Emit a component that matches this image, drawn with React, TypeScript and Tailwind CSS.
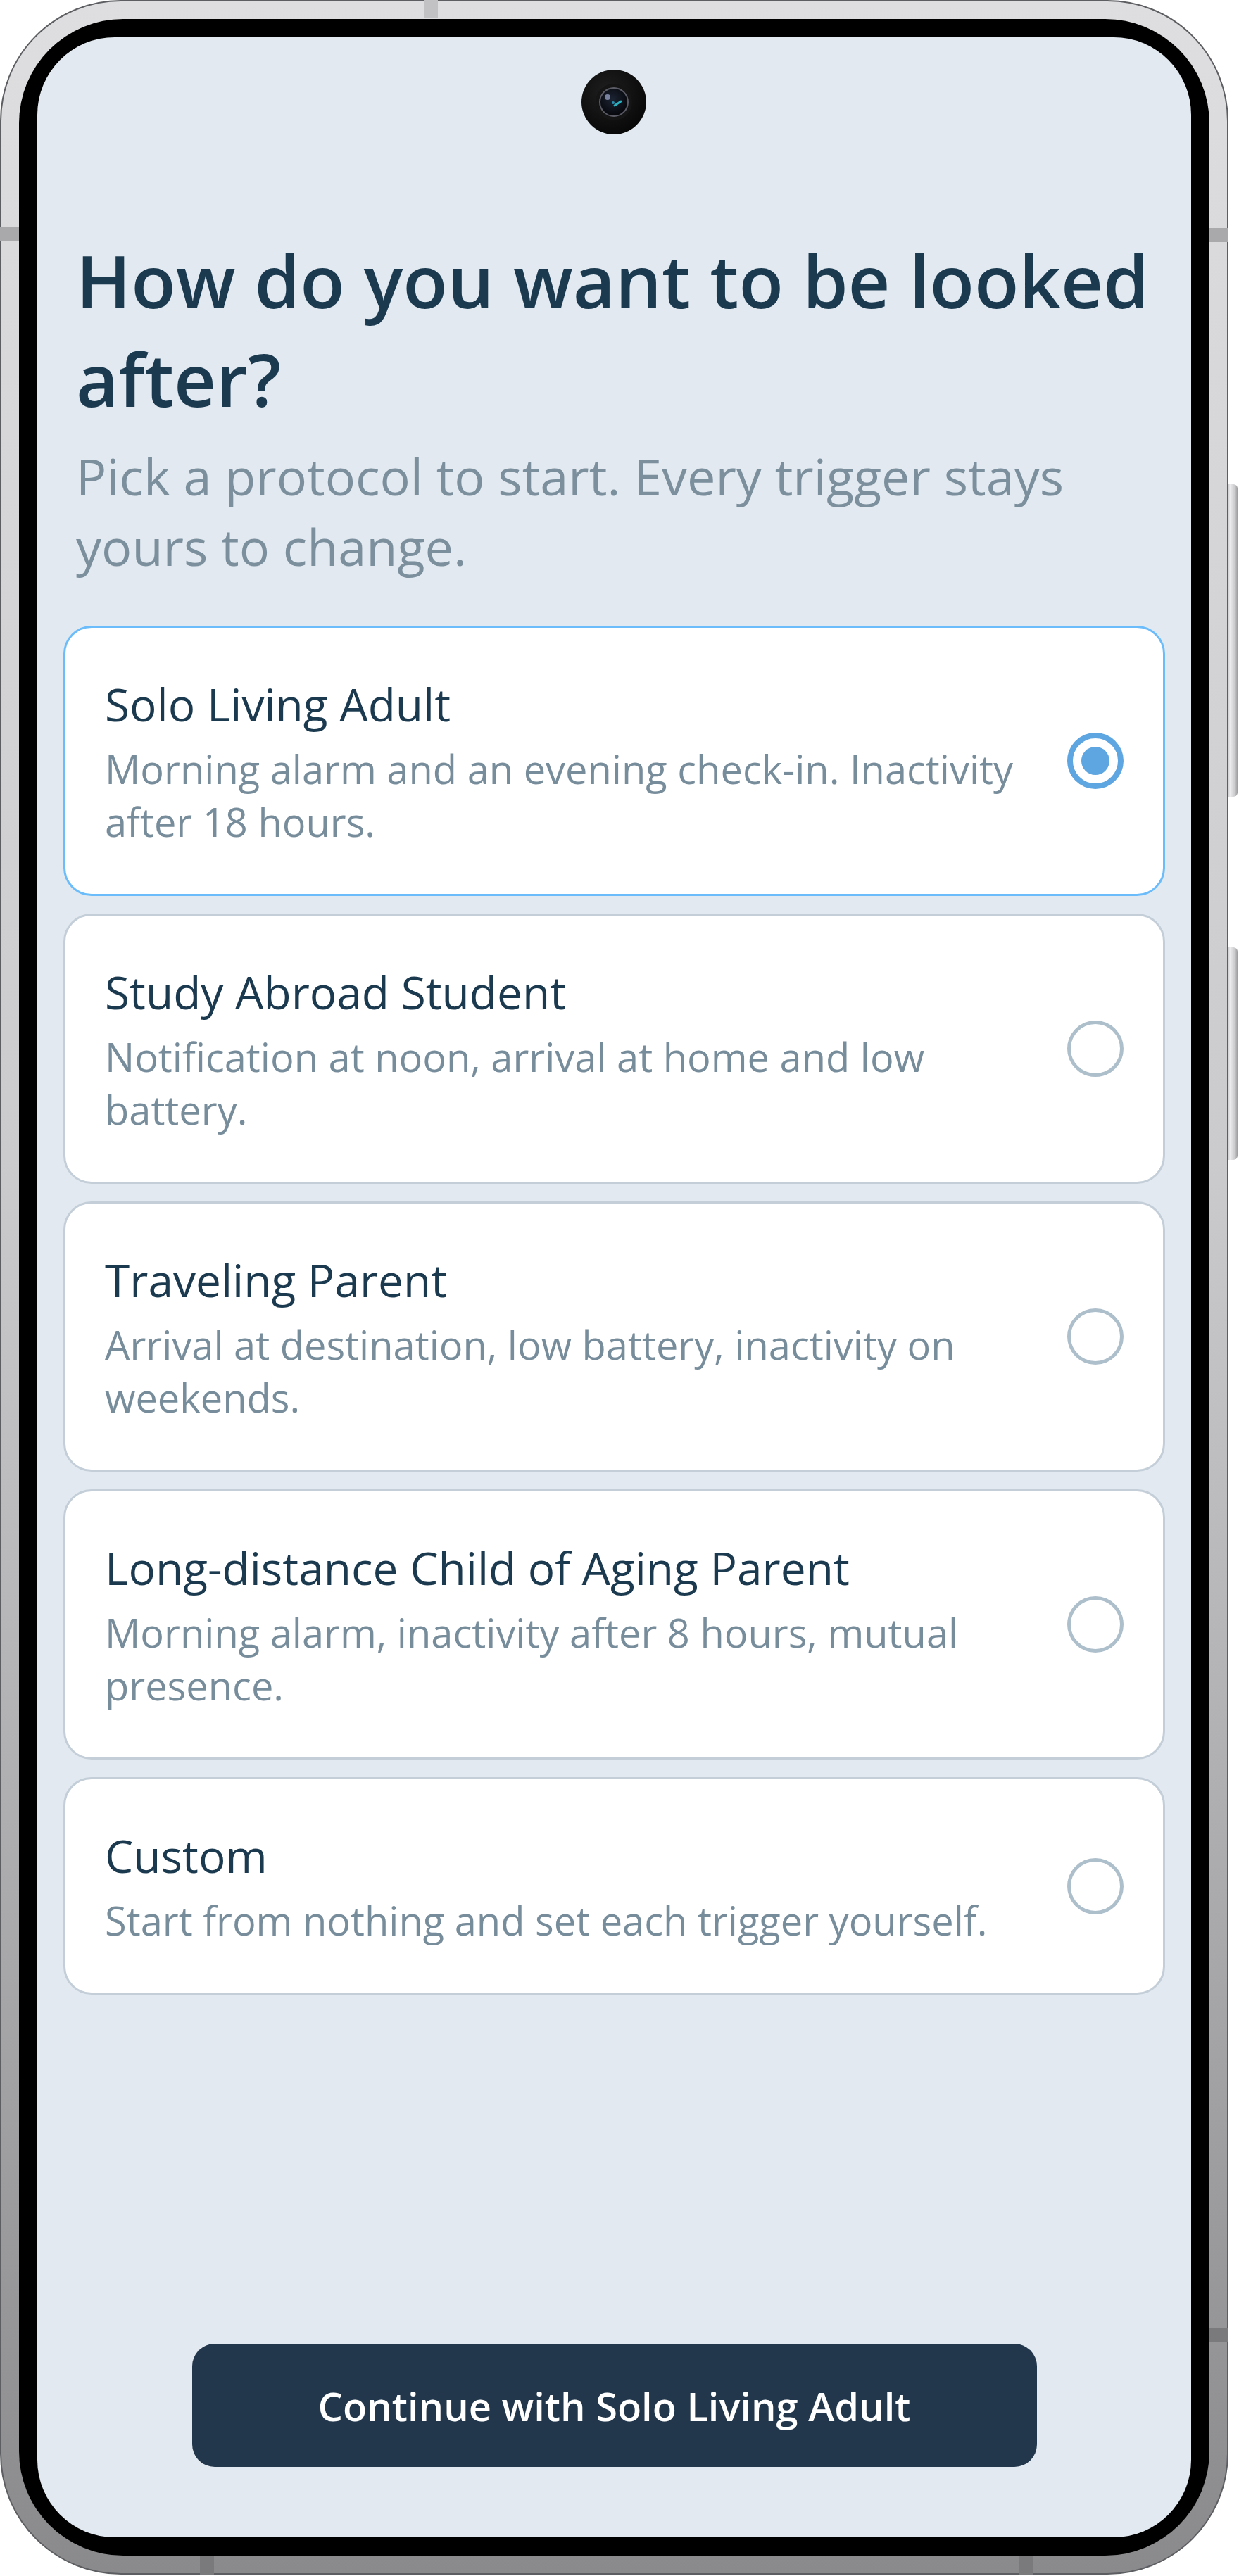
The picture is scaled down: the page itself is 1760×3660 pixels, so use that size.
import React from "react";

const options = [
  { title: "Solo Living Adult", desc: "Morning alarm and an evening check-in. Inactivity after 18 hours." },
  { title: "Study Abroad Student", desc: "Notification at noon, arrival at home and low battery." },
  { title: "Traveling Parent", desc: "Arrival at destination, low battery, inactivity on weekends." },
  { title: "Long-distance Child of Aging Parent", desc: "Morning alarm, inactivity after 8 hours, mutual presence." },
  { title: "Custom", desc: "Start from nothing and set each trigger yourself." },
];

function Radio({ selected }: { selected: boolean }) {
  if (selected) {
    return (
      <div className="flex h-[80px] w-[80px] shrink-0 items-center justify-center rounded-full border-[8px] border-[#5ea6e1]">
        <div className="h-[40px] w-[40px] rounded-full bg-[#5ea6e1]" />
      </div>
    );
  }
  return <div className="h-[80px] w-[80px] shrink-0 rounded-full border-[5px] border-[#aebfcc]" />;
}

function Camera() {
  return (
    <svg width="92" height="92" viewBox="0 0 92 92" className="absolute left-[773px] top-[46px]">
      <defs>
        <radialGradient id="camBody" cx="40%" cy="35%" r="70%">
          <stop offset="0" stopColor="#1f1f1f" />
          <stop offset="1" stopColor="#070707" />
        </radialGradient>
        <radialGradient id="camLens" cx="45%" cy="40%" r="60%">
          <stop offset="0" stopColor="#1c2433" />
          <stop offset="1" stopColor="#05060a" />
        </radialGradient>
      </defs>
      <circle cx="46" cy="46" r="46" fill="url(#camBody)" />
      <circle cx="46" cy="46" r="26" fill="#151515" />
      <circle cx="46" cy="46" r="20" fill="url(#camLens)" stroke="#5b5b66" strokeWidth="2" />
      <circle cx="37" cy="39" r="4" fill="#8a93b3" opacity="0.85" />
      <path d="M47 51 L56 45" stroke="#2bb0c0" strokeWidth="3" strokeLinecap="round" />
      <circle cx="45" cy="47" r="2" fill="#2a8fb0" />
    </svg>
  );
}

export default function App() {
  return (
    <div className="relative h-[3660px] w-[1760px] overflow-hidden bg-white font-['Open_Sans',sans-serif]">
      <div className="relative h-[3658px] w-[1745px]">
        {/* side buttons */}
        <div className="absolute left-[1740px] top-[688px] h-[444px] w-[18px] rounded-r-[6px] bg-[linear-gradient(90deg,#8d8d90,#ececee_40%,#c9c9cc_80%,#9a9a9d)]" />
        <div className="absolute left-[1740px] top-[1346px] h-[302px] w-[18px] rounded-r-[6px] bg-[linear-gradient(90deg,#8d8d90,#ececee_40%,#c9c9cc_80%,#9a9a9d)]" />

        <div className="relative h-full w-full rounded-[172px] border-[2px] border-[#5d5e61] bg-[linear-gradient(180deg,#dedee0_0%,#cbcbce_45%,#a9a9ac_75%,#8a8a8d_100%)] p-[25px]">
          {/* antenna lines */}
          <div className="absolute left-[-2px] top-[320px] h-[20px] w-[28px] bg-[#a9a9ac]" />
          <div className="absolute right-[-2px] top-[322px] h-[20px] w-[28px] bg-[#a9a9ac]" />
          <div className="absolute right-[-2px] top-[3306px] h-[20px] w-[28px] bg-[#7a7a7d]" />
          <div className="absolute left-[600px] top-[-2px] h-[26px] w-[20px] bg-[#c2c2c5]" />
          <div className="absolute left-[282px] bottom-[-2px] h-[28px] w-[20px] bg-[#7a7a7d]" />
          <div className="absolute left-[1446px] bottom-[-2px] h-[28px] w-[20px] bg-[#7a7a7d]" />

          <div className="relative h-full w-full rounded-[148px] bg-black p-[26px]">
            <div className="relative flex h-full w-full flex-col overflow-hidden rounded-[110px] bg-[#e2e9f0] px-[37px] pt-[275px]">
              <Camera />

              <div className="px-[18px]">
                <h1 className="text-[104px] font-semibold leading-[140px] text-[#1b3a4f]">
                  How do you want to be looked after?
                </h1>
                <p className="mt-[18px] text-[72px] leading-[100px] text-[#7b8f9d]">
                  Pick a protocol to start. Every trigger stays yours to change.
                </p>
              </div>

              <div className="mt-[63px] flex flex-col gap-[25px]">
                {options.map((o, i) => (
                  <div
                    key={o.title}
                    className={
                      i === 0
                        ? "flex items-center gap-[48px] rounded-[40px] border-[3px] border-[#6bbcfb] bg-white px-[56px] py-[65px]"
                        : "flex items-center gap-[48px] rounded-[40px] border-[3px] border-[#c3ced8] bg-white px-[56px] py-[65px]"
                    }
                  >
                    <div className="min-w-0 flex-1">
                      <div className="text-[64px] font-medium leading-[88px] text-[#1b3a4f]">{o.title}</div>
                      <div className="mt-[10px] text-[56px] leading-[75px] text-[#788d9b]">{o.desc}</div>
                    </div>
                    <Radio selected={i === 0} />
                  </div>
                ))}
              </div>

              <div className="flex-1" />

              <div className="flex justify-center pb-[100px]">
                <button className="flex h-[175px] w-[1200px] items-center justify-center rounded-[32px] bg-[#22374b] text-[56px] font-semibold text-white">
                  Continue with Solo Living Adult
                </button>
              </div>
            </div>
          </div>
        </div>
      </div>
    </div>
  );
}
